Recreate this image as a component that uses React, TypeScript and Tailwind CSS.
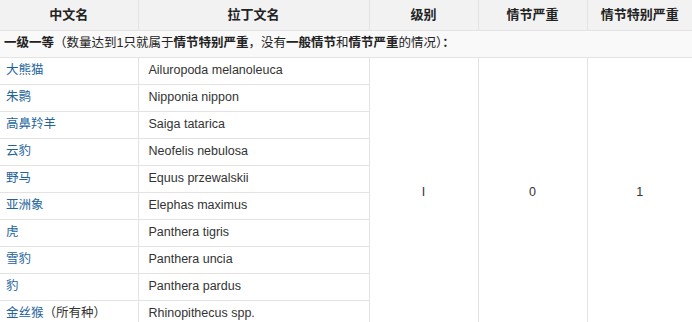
const SPECIES: { cn: string; note?: string; latin: string }[] = [
  { cn: "大熊猫", latin: "Ailuropoda melanoleuca" },
  { cn: "朱鹮", latin: "Nipponia nippon" },
  { cn: "高鼻羚羊", latin: "Saiga tatarica" },
  { cn: "云豹", latin: "Neofelis nebulosa" },
  { cn: "野马", latin: "Equus przewalskii" },
  { cn: "亚洲象", latin: "Elephas maximus" },
  { cn: "虎", latin: "Panthera tigris" },
  { cn: "雪豹", latin: "Panthera uncia" },
  { cn: "豹", latin: "Panthera pardus" },
  { cn: "金丝猴", note: "（所有种）", latin: "Rhinopithecus spp." },
];

const FONT = "font-['Liberation_Sans','Noto_Sans_CJK_SC',sans-serif]";

export default function App() {
  return (
    <div className={`w-[692px] h-[322px] overflow-hidden bg-white text-[12.5px] text-[#333] ${FONT}`}>
      <table className="w-[692px] table-fixed border-collapse">
        <colgroup>
          <col className="w-[138px]" />
          <col className="w-[231px]" />
          <col className="w-[109px]" />
          <col className="w-[109px]" />
          <col className="w-[105px]" />
        </colgroup>
        <thead>
          <tr className="h-[30px] bg-[#f2f2f2]">
            {["中文名", "拉丁文名", "级别", "情节严重", "情节特别严重"].map(h => (
              <th
                key={h}
                className="border border-t-0 border-[#e3e3e3] first:border-l-0 last:border-r-0 font-bold text-[13px] text-[#222] text-center"
              >
                {h}
              </th>
            ))}
          </tr>
        </thead>
        <tbody>
          <tr className="h-[27px] bg-[#f9f9f9]">
            <td colSpan={5} className="border-b border-[#e3e3e3] px-[4px] text-[#222]">
              <b>一级一等</b>（数量达到1只就属于<b>情节特别严重</b>，没有<b>一般情节</b>和<b>情节严重</b>的情况）<b>：</b>
            </td>
          </tr>
          {SPECIES.map((s, i) => (
            <tr key={s.cn} className="h-[27px]">
              <td className="border-r border-b border-[#e3e3e3] pl-[6px] whitespace-nowrap">
                <span className="text-[#22639c]">{s.cn}</span>
                {s.note && <span className="text-[#333]">{s.note}</span>}
              </td>
              <td className="border-r border-b border-[#e3e3e3] pl-[10px]">{s.latin}</td>
              {i === 0 && (
                <>
                  <td rowSpan={10} className="border-r border-b border-[#e3e3e3] text-center">I</td>
                  <td rowSpan={10} className="border-r border-b border-[#e3e3e3] text-center">0</td>
                  <td rowSpan={10} className="border-b border-[#e3e3e3] text-center">1</td>
                </>
              )}
            </tr>
          ))}
        </tbody>
      </table>
    </div>
  );
}
